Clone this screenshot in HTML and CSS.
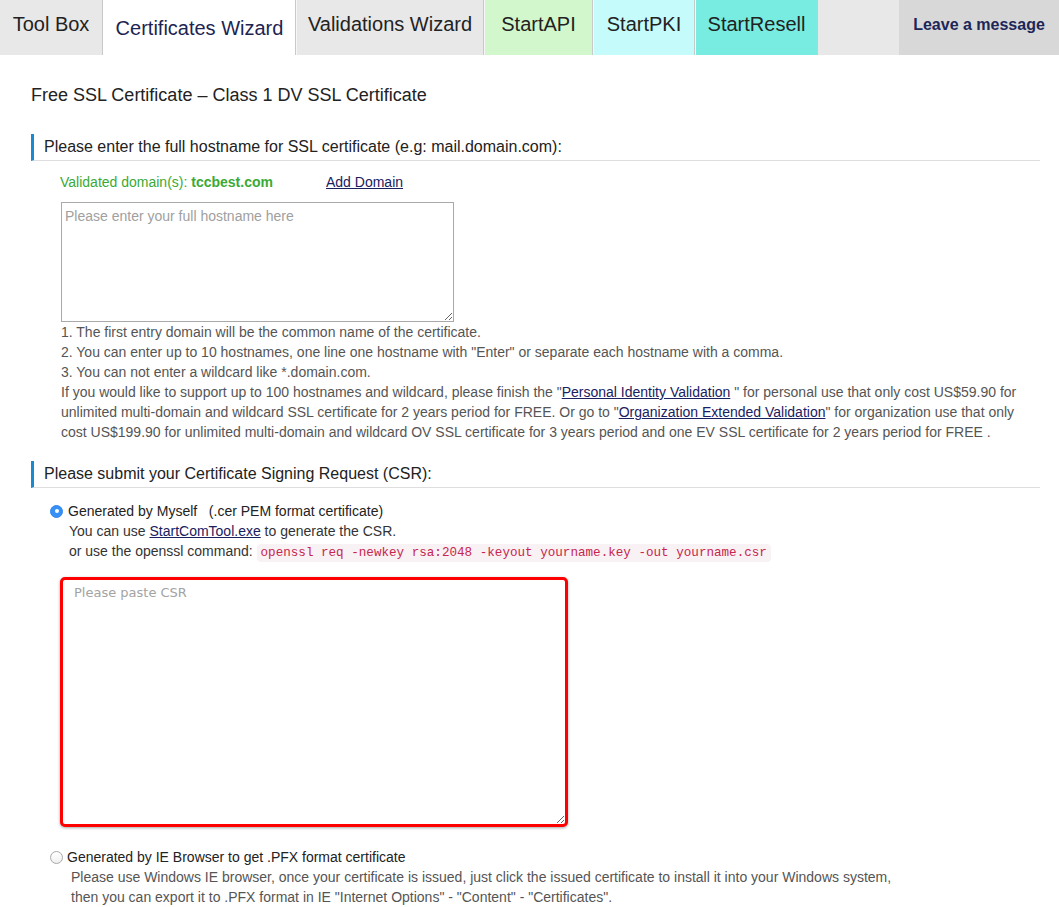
FILE: index.html
```html
<!DOCTYPE html>
<html lang="en">
<head>
<meta charset="utf-8">
<title>Certificates Wizard</title>
<link rel="stylesheet" href="styles.css">
</head>
<body>
<nav class="tabs">
  <a class="tab tab-toolbox">Tool Box</a>
  <a class="tab tab-cert active">Certificates Wizard</a>
  <a class="tab tab-valid">Validations Wizard</a>
  <a class="tab tab-api">StartAPI</a>
  <a class="tab tab-pki">StartPKI</a>
  <a class="tab tab-resell">StartResell</a>
  <span class="tabs-fill"></span>
  <a class="tab-msg">Leave a message</a>
</nav>

<main class="content">
  <h1 class="page-title">Free SSL Certificate – Class 1 DV SSL Certificate</h1>

  <h2 class="section-head">Please enter the full hostname for SSL certificate (e.g: mail.domain.com):</h2>
  <div class="host-block">
    <div class="validated">
      <span class="validated-label">Validated domain(s): <b>tccbest.com</b></span>
      <a class="link">Add Domain</a>
    </div>
    <textarea class="host-input" placeholder="Please enter your full hostname here"></textarea>
    <div class="notes">
      1. The first entry domain will be the common name of the certificate.<br>
      2. You can enter up to 10 hostnames, one line one hostname with "Enter" or separate each hostname with a comma.<br>
      3. You can not enter a wildcard like *.domain.com.<br>
      If you would like to support up to 100 hostnames and wildcard, please finish the "<a class="link">Personal Identity Validation</a> " for personal use that only cost US$59.90 for<br>
      unlimited multi-domain and wildcard SSL certificate for 2 years period for FREE. Or go to "<a class="link">Organization Extended Validation</a>" for organization use that only<br>
      cost US$199.90 for unlimited multi-domain and wildcard OV SSL certificate for 3 years period and one EV SSL certificate for 2 years period for FREE .
    </div>
  </div>

  <h2 class="section-head csr-head">Please submit your Certificate Signing Request (CSR):</h2>
  <div class="csr-block">
    <label class="radio-row">
      <input type="radio" name="csr" class="radio" checked>
      <span>Generated by Myself &nbsp; (.cer PEM format certificate)</span>
    </label>
    <div class="radio-desc">
      You can use <a class="link">StartComTool.exe</a> to generate the CSR.<br>
      or use the openssl command: <code class="cmd">openssl req -newkey rsa:2048 -keyout yourname.key -out yourname.csr</code>
    </div>
    <textarea class="csr-input" placeholder="Please paste CSR"></textarea>

    <label class="radio-row ie-row">
      <input type="radio" name="csr" class="radio">
      <span>Generated by IE Browser to get .PFX format certificate</span>
    </label>
    <div class="radio-desc ie-desc">
      Please use Windows IE browser, once your certificate is issued, just click the issued certificate to install it into your Windows system,<br>
      then you can export it to .PFX format in IE "Internet Options" - "Content" - "Certificates".
    </div>
  </div>
</main>
</body>
</html>
```

FILE: styles.css
```css
* { box-sizing: border-box; }

html, body {
  margin: 0;
  padding: 0;
  background: #fff;
  font-family: "Liberation Sans", Arial, Helvetica, sans-serif;
  color: #333;
}

/* ---------- tabs ---------- */
.tabs {
  display: flex;
  height: 55px;
  background: #e8e8e8;
}

.tab {
  display: flex;
  align-items: center;
  justify-content: center;
  height: 55px;
  padding-bottom: 7px;
  font-size: 20px;
  color: #222;
  text-decoration: none;
  border-right: 1px solid #c9c9c9;
  border-left: 1px solid #f6f6f6;
  white-space: nowrap;
}
.tab-toolbox { width: 103px; border-left: none; }
.tab-cert    { width: 193px; }
.tab-valid   { width: 188px; }
.tab-api     { width: 109px; background: #d2f7cd; }
.tab-pki     { width: 102px; background: #c5fbfb; }
.tab-resell  { width: 123px; background: #78ece0; }

.tab.active {
  background: #fff;
  color: #1c2452;
  padding-bottom: 0;
  padding-top: 1px;
  border-left-color: #fff;
}

.tabs-fill { flex: 1; }

.tab-msg {
  display: flex;
  align-items: center;
  justify-content: center;
  width: 160px;
  height: 55px;
  padding-bottom: 5px;
  background: #d8d8d8;
  color: #1c2657;
  font-size: 16px;
  font-weight: bold;
  white-space: nowrap;
}

/* ---------- content ---------- */
.content {
  padding: 0 19px 0 31px;
}

.page-title {
  margin: 30px 0 0;
  font-size: 18px;
  line-height: 20px;
  font-weight: normal;
  color: #222;
}

.section-head {
  margin: 29px 0 0;
  padding: 4px 0 5px 10px;
  font-size: 16px;
  line-height: 17px;
  font-weight: normal;
  color: #222;
  border-left: 3px solid #1a8ad0;
  border-bottom: 1px solid #dedede;
}
.csr-head { margin-top: 19px; }

.host-block {
  padding-left: 30px;
}

.validated {
  display: flex;
  margin-top: 11px;
  font-size: 14px;
  line-height: 20px;
  margin-left: -1px;
}
.validated-label {
  width: 266px;
  color: #3aaa35;
}
.validated-label b { font-weight: bold; }

.link {
  color: #1a2060;
  text-decoration: underline;
  cursor: pointer;
}

.host-input {
  display: block;
  width: 393px;
  height: 120px;
  margin-top: 10px;
  padding: 5px 3px;
  border: 1px solid #a9a9a9;
  border-radius: 0;
  font-family: "Liberation Sans", Arial, sans-serif;
  font-size: 14px;
  line-height: 17px;
  color: #333;
  outline: none;
}
.host-input::placeholder { color: #a0a0a0; }

.notes {
  font-size: 14px;
  line-height: 20px;
  color: #555;
  white-space: nowrap;
}

/* ---------- CSR ---------- */
.csr-block {
  padding-left: 19px;
}

.radio-row {
  display: flex;
  align-items: center;
  gap: 5px;
  margin-top: 13px;
  font-size: 14px;
  line-height: 20px;
  color: #222;
}

.radio {
  appearance: none;
  -webkit-appearance: none;
  flex: none;
  width: 13px;
  height: 13px;
  margin: 0;
  border-radius: 50%;
  border: 1px solid #a8a8a8;
  background: linear-gradient(#fff, #f0f0f0);
  position: relative;
}
.radio:checked {
  border-color: #2f86f0;
  background: #3790f5;
}
.radio:checked::after {
  content: "";
  position: absolute;
  left: 3.5px;
  top: 3.5px;
  width: 4px;
  height: 4px;
  border-radius: 50%;
  background: #fff;
}

.radio-desc {
  padding-left: 19px;
  font-size: 14px;
  line-height: 20px;
  color: #333;
  white-space: nowrap;
}

.cmd {
  font-family: "Liberation Mono", "Courier New", monospace;
  font-size: 12.6px;
  line-height: 14px;
  padding: 2px 4px;
  color: #c7254e;
  background: #f9f2f4;
  border-radius: 4px;
}

.csr-input {
  display: block;
  width: 508px;
  height: 250px;
  margin: 16px 0 0 10px;
  padding: 4px 11px;
  border: 3px solid #ff0000;
  border-radius: 5px;
  box-shadow: 0 1px 3px rgba(0, 0, 0, 0.35);
  font-family: "DejaVu Sans", sans-serif;
  font-size: 13px;
  line-height: 17px;
  outline: none;
  color: #333;
}
.csr-input::placeholder { color: #a3a3a3; }

.ie-row { margin-top: 20px; gap: 4px; }
.ie-desc {
  padding-left: 21px;
  color: #555;
}
```
